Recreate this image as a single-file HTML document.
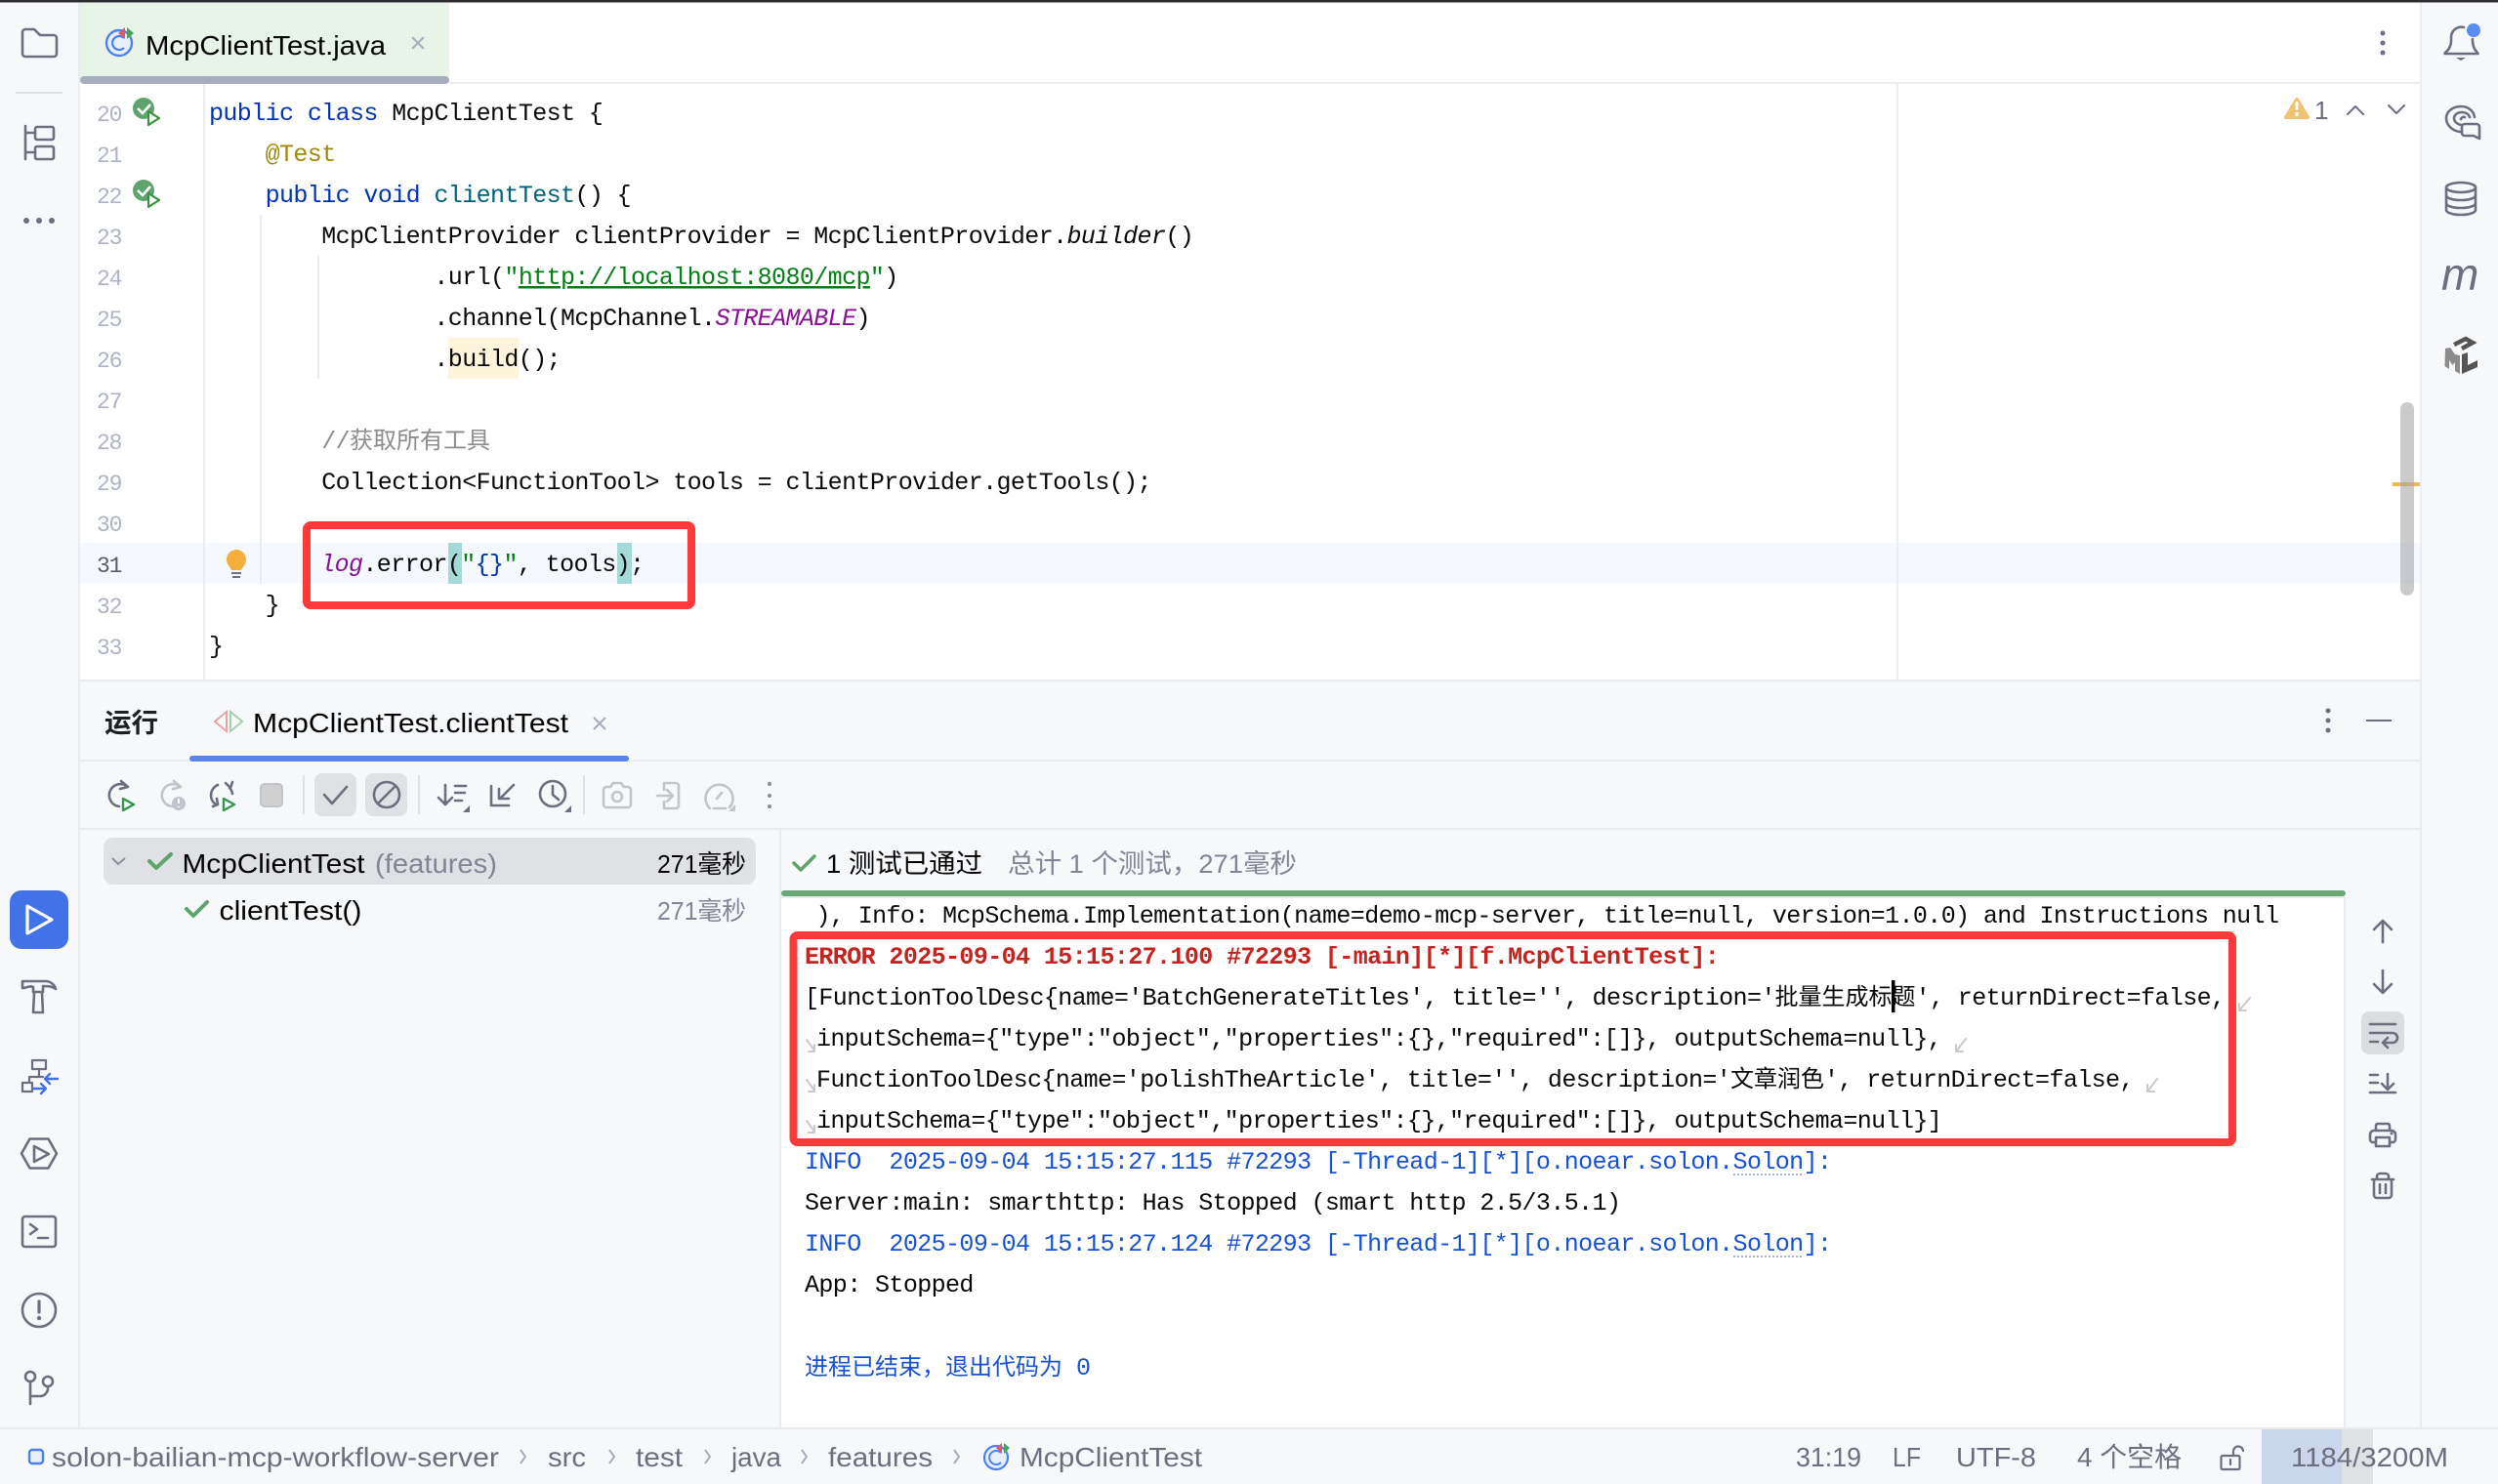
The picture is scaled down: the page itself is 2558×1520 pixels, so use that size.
<!DOCTYPE html>
<html><head><meta charset="utf-8"><style>
html,body{margin:0;padding:0;background:#f7f8fa;width:2558px;height:1520px;overflow:hidden}
svg{display:block}
text{white-space:pre}
.m{font-family:"Liberation Mono","Noto Sans CJK SC",monospace;font-size:25px;letter-spacing:-.6px;fill:#080808}
.cj{font-family:"Noto Sans CJK SC","Liberation Sans",sans-serif;font-size:24px;letter-spacing:0}
.n{font-family:"Liberation Mono",monospace;font-size:23px;letter-spacing:-1.2px;fill:#aeb3c2}
.s{font-family:"Liberation Sans","Noto Sans CJK SC",sans-serif;font-size:28px;fill:#000}
.g{fill:#6c707e}
.kw{fill:#0033b3}.st{fill:#067d17}.it{font-style:italic}.pu{fill:#871094}.er{fill:#c4241f;font-weight:bold}.bl{fill:#1750d0}
.ic{fill:none;stroke:#6c707e;stroke-width:2.6;stroke-linecap:round;stroke-linejoin:round}
.ig{fill:none;stroke:#c2c4cb;stroke-width:2.6;stroke-linecap:round;stroke-linejoin:round}
.wr{fill:none;stroke:#c9c9c9;stroke-width:2;stroke-linecap:round;stroke-linejoin:round}
</style></head><body>
<svg xmlns="http://www.w3.org/2000/svg" width="2558" height="1520" viewBox="0 0 2558 1520">
<rect width="2558" height="1520" fill="#f7f8fa"/>
<rect width="2558" height="2.5" fill="#2b2b30"/>

<!-- editor -->
<rect x="82" y="3" width="2396" height="693" fill="#fff"/>
<rect x="80" y="3" width="2" height="1459" fill="#ebecf0"/>
<rect x="2478" y="3" width="2" height="1459" fill="#ebecf0"/>
<rect x="82" y="3" width="378" height="76" fill="#e8f4e8"/>
<rect x="460" y="84" width="2018" height="2" fill="#ebecf0"/>
<rect x="82" y="78" width="378" height="8" rx="4" fill="#a8adbd"/>
<!-- tab icon -->
<circle cx="122" cy="44" r="13" fill="#e7effd" stroke="#4b82ee" stroke-width="2.4"/>
<path d="M127 39a7 7 0 1 0 0 10" fill="none" stroke="#4b82ee" stroke-width="2.2"/>
<path d="M128 28l-7 6 7 6z" fill="#e55765"/><path d="M130 28l7 6-7 6z" fill="#4f9e5a"/>
<text class="s" x="149" y="56" textLength="246" lengthAdjust="spacingAndGlyphs">McpClientTest.java</text>
<path d="M422 38l12 12M434 38l-12 12" fill="none" stroke="#a8adbd" stroke-width="2"/>
<!-- top right -->
<circle cx="2440" cy="34" r="2.5" fill="#6c707e"/><circle cx="2440" cy="44" r="2.5" fill="#6c707e"/><circle cx="2440" cy="54" r="2.5" fill="#6c707e"/>
<path d="M2352 102l11 18h-22z" fill="#efc36f" stroke="#efc36f" stroke-width="4" stroke-linejoin="round"/>
<rect x="2350.500" y="104" width="3" height="9" rx="1.500" fill="#fff"/><circle cx="2352" cy="117" r="2" fill="#fff"/>
<text class="s" x="2370" y="122" style="font-size:26px;fill:#6c707e">1</text>
<path class="ic" style="stroke-width:2" d="M2404 117l8-8 8 8M2446 108l8 8 8-8"/>

<!-- gutter / guides -->
<rect x="82" y="556" width="2396" height="42" fill="#f5f8fe"/>
<rect x="208" y="86" width="2" height="610" fill="#ebecf0"/>
<rect x="1942" y="86" width="2" height="610" fill="#ebecf0"/>
<rect x="266" y="220" width="2" height="378" fill="#ebecf0"/>
<rect x="325" y="262" width="2" height="126" fill="#ebecf0"/>
<rect x="459" y="346" width="72" height="42" fill="#fcf5dc"/>
<rect x="459" y="556" width="14" height="42" fill="#a3d9d6"/>
<rect x="632" y="556" width="15" height="42" fill="#a3d9d6"/>

<g class="n">
<text x="99" y="124">20</text><text x="99" y="166">21</text><text x="99" y="208">22</text><text x="99" y="250">23</text><text x="99" y="292">24</text><text x="99" y="334">25</text><text x="99" y="376">26</text><text x="99" y="418">27</text><text x="99" y="460">28</text><text x="99" y="502">29</text><text x="99" y="544">30</text><text x="99" y="586" style="fill:#5a5d6b">31</text><text x="99" y="628">32</text><text x="99" y="670">33</text>
</g>
<!-- gutter run icons -->
<g id="gr"><circle cx="147" cy="111" r="11" fill="#5fa46f"/><path d="M141 111l5 5 8-9" fill="none" stroke="#fff" stroke-width="2.6"/><path d="M152 114l11 7-11 7z" fill="#fff" stroke="#3a923f" stroke-width="2.2" stroke-linejoin="round"/></g>
<g transform="translate(0,84)"><circle cx="147" cy="111" r="11" fill="#5fa46f"/><path d="M141 111l5 5 8-9" fill="none" stroke="#fff" stroke-width="2.6"/><path d="M152 114l11 7-11 7z" fill="#fff" stroke="#3a923f" stroke-width="2.2" stroke-linejoin="round"/></g>
<!-- bulb -->
<path d="M242 563c-6 0-10 5-10 10 0 5 3 7 5 11h10c2-4 5-6 5-11 0-5-4-10-10-10z" fill="#f4af3d"/>
<path d="M237 587h10M238 591h8" stroke="#6c707e" stroke-width="2"/>

<!-- code -->
<g class="m" xml:space="preserve" transform="translate(0,-1)">
<text x="214" y="124"><tspan class="kw">public class </tspan>McpClientTest {</text>
<text x="271.600" y="166" style="fill:#9e880d">@Test</text>
<text x="271.600" y="208"><tspan class="kw">public void </tspan><tspan fill="#00627a">clientTest</tspan>() {</text>
<text x="329.200" y="250">McpClientProvider clientProvider = McpClientProvider.<tspan class="it">builder</tspan>()</text>
<text x="444.400" y="292">.url(<tspan class="st">"</tspan><tspan class="st" text-decoration="underline">http://localhost:8080/mcp</tspan><tspan class="st">"</tspan>)</text>
<text x="444.400" y="334">.channel(McpChannel.<tspan class="it pu">STREAMABLE</tspan>)</text>
<text x="444.400" y="376">.build();</text>
<text x="329.200" y="460" style="fill:#8c8c8c">//</text><text class="cj" x="358" y="460" style="fill:#8c8c8c">获取所有工具</text>
<text x="329.200" y="502">Collection&lt;FunctionTool&gt; tools = clientProvider.getTools();</text>
<text x="328.200" y="586"><tspan class="it pu">log</tspan>.error(<tspan class="st">"</tspan><tspan fill="#0037a6">{}</tspan><tspan class="st">"</tspan>, tools);</text>
<text x="271.600" y="628">}</text>
<text x="214" y="670">}</text>
</g>

<!-- scrollbar -->
<rect x="2450" y="494" width="28" height="4" fill="#e8bc5d"/>
<rect x="2458" y="412" width="14" height="198" rx="7" fill="#a0a0a0" fill-opacity=".55"/>

<!-- red box editor -->
<rect x="314" y="538" width="394" height="82" rx="4" fill="none" stroke="#fc3a3a" stroke-width="8"/>

<!-- tool window -->
<rect x="82" y="696" width="2396" height="2" fill="#ebecf0"/>
<text class="s" x="107" y="750" textLength="55" lengthAdjust="spacingAndGlyphs" style="font-weight:bold;font-size:27px;fill:#1e1f22">运行</text>
<path d="M232 729L220 739 232 749z" fill="none" stroke="#e8a5a5" stroke-width="2"/><path d="M236 729L248 739 236 749z" fill="none" stroke="#a8cfae" stroke-width="2"/>
<text class="s" x="259" y="750" textLength="323" lengthAdjust="spacingAndGlyphs">McpClientTest.clientTest</text>
<path d="M608 735l12 12M620 735l-12 12" fill="none" stroke="#a8adbd" stroke-width="2"/>
<circle cx="2384" cy="728" r="2.500" fill="#6c707e"/><circle cx="2384" cy="738" r="2.500" fill="#6c707e"/><circle cx="2384" cy="748" r="2.500" fill="#6c707e"/>
<rect x="2423" y="737" width="26" height="2" fill="#6c707e"/>
<rect x="82" y="778" width="2396" height="2" fill="#ebecf0"/>
<rect x="194" y="774" width="450" height="6" rx="3" fill="#5a85e8"/>
<rect x="82" y="848" width="2396" height="2" fill="#ebecf0"/>

<!-- toolbar -->
<path class="ic" d="M131 806a11.500 11.500 0 1 0-9 20M124 800l7 6-8 2"/><path d="M126 818l11 6-11 6z" fill="none" stroke="#369650" stroke-width="2.400" stroke-linejoin="round"/>
<path class="ig" d="M185 806a11.500 11.500 0 1 0-9 20M178 800l7 6-8 2"/><circle cx="183" cy="823" r="7" fill="#c2c4cb"/><path d="M183 818v5M183 826v1" stroke="#fff" stroke-width="2"/>
<path class="ic" d="M223 804a11.500 11.500 0 0 0-2 20M218 826l5-2-1-6"/><path class="ic" d="M231 802l5 5 2-6M235 807a11 11 0 0 1 3 6"/><path d="M229 818l11 6-11 6z" fill="none" stroke="#369650" stroke-width="2.400" stroke-linejoin="round"/>
<rect x="267" y="803" width="22" height="23" rx="4" fill="#d0d0d0" stroke="#c2c4cb" stroke-width="2"/>
<rect x="310" y="794" width="2" height="40" fill="#dfe1e5"/>
<rect x="322" y="792" width="43" height="44" rx="8" fill="#dfe1e5"/><path class="ic" d="M332 814l8 9 15-17"/>
<rect x="374" y="792" width="43" height="44" rx="8" fill="#dfe1e5"/><circle class="ic" cx="396" cy="814" r="13"/><path class="ic" d="M387 823l18-18"/>
<rect x="428" y="794" width="2" height="40" fill="#dfe1e5"/>
<path class="ic" d="M456 804v20M449 817l7 7 7-7M466 805h11M466 812h10M466 820h7"/><path d="M481 825v7h-7z" fill="#6c707e"/>
<path class="ic" d="M503 805v20h18M526 804l-14 14M511 808v10h10"/>
<circle class="ic" cx="566" cy="813" r="13"/><path class="ic" d="M566 805v9l6 5"/><path d="M585 825v7h-7z" fill="#6c707e"/>
<rect x="597" y="794" width="2" height="40" fill="#dfe1e5"/>
<path class="ig" d="M621 806h4l3-4h8l3 4h4a3 3 0 0 1 3 3v15a3 3 0 0 1-3 3h-22a3 3 0 0 1-3-3v-15a3 3 0 0 1 3-3z"/><circle class="ig" cx="632" cy="816" r="5"/>
<path class="ig" d="M680 802h12a3 3 0 0 1 3 3v20a3 3 0 0 1-3 3h-12v-7M680 809v-7M673 815h15M683 809l6 6-6 6"/>
<path class="ig" d="M727 828a14 14 0 1 1 20-1M731 828h12M734 818l5-6"/><path d="M753 824v7h-7z" fill="#c2c4cb"/>
<circle cx="788" cy="803" r="2" fill="#8a8d99"/><circle cx="788" cy="815" r="2" fill="#8a8d99"/><circle cx="788" cy="826" r="2" fill="#8a8d99"/>

<!-- tree -->
<rect x="106" y="858" width="668" height="48" rx="10" fill="#dfe1e5"/>
<path d="M115 879l6 6 7-6" fill="none" stroke="#8c8f9b" stroke-width="2"/>
<path d="M153 882l7 7 15-14" fill="none" stroke="#5fa46f" stroke-width="4" stroke-linecap="round" stroke-linejoin="round"/>
<text class="s" x="186.500" y="894" textLength="187" lengthAdjust="spacingAndGlyphs">McpClientTest</text>
<text class="s" x="384" y="894" textLength="125" lengthAdjust="spacingAndGlyphs" style="fill:#818594">(features)</text>
<text class="s" x="673" y="894" textLength="91" lengthAdjust="spacingAndGlyphs" style="font-size:26px">271毫秒</text>
<path d="M191 931l7 7 14-14" fill="none" stroke="#5fa46f" stroke-width="4" stroke-linecap="round" stroke-linejoin="round"/>
<text class="s" x="224.500" y="942" textLength="146" lengthAdjust="spacingAndGlyphs">clientTest()</text>
<text class="s" x="673" y="942" textLength="91" lengthAdjust="spacingAndGlyphs" style="font-size:26px;fill:#818594">271毫秒</text>

<!-- console panel -->
<rect x="798" y="850" width="2" height="612" fill="#ebecf0"/>
<path d="M813 884l7 7 14-14" fill="none" stroke="#5fa46f" stroke-width="3.500" stroke-linecap="round" stroke-linejoin="round"/>
<text class="s" x="846" y="894" textLength="160" lengthAdjust="spacingAndGlyphs" style="font-size:27px">1 测试已通过</text>
<text class="s" x="1032" y="894" textLength="296" lengthAdjust="spacingAndGlyphs" style="font-size:27px;fill:#818594">总计 1 个测试，271毫秒</text>
<rect x="800" y="918" width="1602" height="544" fill="#fff"/>
<rect x="800" y="918" width="1602" height="2" fill="#ebecf0"/>
<rect x="800" y="912" width="1602" height="6" rx="3" fill="#6aa775"/>
<rect x="2400" y="918" width="2" height="544" fill="#ebecf0"/>

<g class="m" xml:space="preserve">
<text x="835.500" y="945">), Info: McpSchema.Implementation(name=demo-mcp-server, title=null, version=1.0.0) and Instructions null</text>
<text class="er" x="824" y="987">ERROR 2025-09-04 15:15:27.100 #72293 [-main][*][f.McpClientTest]:</text>
<text x="824" y="1029">[FunctionToolDesc{name='BatchGenerateTitles', title='', description='</text><text class="cj" x="1817.500" y="1029">批量生成标题</text><text x="1961.600" y="1029">', returnDirect=false,</text>
<text x="836" y="1071">inputSchema={"type":"object","properties":{},"required":[]}, outputSchema=null},</text>
<text x="836" y="1113">FunctionToolDesc{name='polishTheArticle', title='', description='</text><text class="cj" x="1772" y="1113">文章润色</text><text x="1868" y="1113">', returnDirect=false,</text>
<text x="836" y="1155">inputSchema={"type":"object","properties":{},"required":[]}, outputSchema=null}]</text>
<text class="bl" x="824" y="1197">INFO  2025-09-04 15:15:27.115 #72293 [-Thread-1][*][o.noear.solon.Solon]:</text>
<text x="824" y="1239">Server:main: smarthttp: Has Stopped (smart http 2.5/3.5.1)</text>
<text class="bl" x="824" y="1281">INFO  2025-09-04 15:15:27.124 #72293 [-Thread-1][*][o.noear.solon.Solon]:</text>
<text x="824" y="1323">App: Stopped</text>
<text class="cj bl" x="824" y="1408">进程已结束，退出代码为</text><text class="bl" x="1102" y="1408">0</text>
</g>
<path d="M1775 1203h72M1775 1287h72" stroke="#8f9bb5" stroke-width="1.500" stroke-dasharray="2 2" fill="none"/>
<rect x="1937" y="1004" width="3.500" height="33" fill="#000"/>
<!-- wrap marks -->
<path class="wr" d="M2304 1022l-11 13M2293 1028v7h7M2013 1064l-10 13M2003 1070v7h7M2209 1105l-10 13M2199 1111v7h7"/>
<path class="wr" d="M826 1065l8 11M834 1070v7h-6M826 1106l8 11M834 1111v7h-6M826 1148l8 11M834 1153v7h-6"/>
<!-- red box console -->
<rect x="812.500" y="958" width="1473.500" height="212" rx="4" fill="none" stroke="#fc3a3a" stroke-width="8"/>

<!-- console toolbar -->
<path class="ic" d="M2440 965v-21M2431 952l9-9 9 9M2440 994v22M2431 1008l9 9 9-9"/>
<rect x="2418" y="1036" width="44" height="44" rx="8" fill="#dcdde0"/>
<path class="ic" d="M2427 1049h26M2427 1058h23a5 5 0 0 1 0 10h-9M2445 1063l-5 5 5 5M2427 1067h8"/>
<path class="ic" d="M2427 1101h8M2427 1109h8M2427 1119h26M2445 1100v15M2439 1110l6 6 6-6"/>
<path class="ic" d="M2433 1158v-5a2 2 0 0 1 2-2h10a2 2 0 0 1 2 2v5M2433 1170h-3a3 3 0 0 1-3-3v-5a4 4 0 0 1 4-4h18a4 4 0 0 1 4 4v5a3 3 0 0 1-3 3h-3M2433 1165h14v9h-14z"/><circle cx="2449" cy="1161" r="1.500" fill="#6c707e"/>
<path class="ic" d="M2429 1208h22M2434 1208v-3a3 3 0 0 1 3-3h6a3 3 0 0 1 3 3v3M2431 1208v16a3 3 0 0 0 3 3h12a3 3 0 0 0 3-3v-16M2437 1213v9M2443 1213v9"/>

<!-- left stripe -->
<path class="ic" d="M23 33a3 3 0 0 1 3-3h9l6 6h14a3 3 0 0 1 3 3v16a3 3 0 0 1-3 3H26a3 3 0 0 1-3-3z"/>
<rect x="16" y="94" width="48" height="2" fill="#dfe1e5"/>
<path class="ic" d="M26 129v34M26 136h10M26 156h10"/><rect class="ic" x="36" y="130" width="19" height="13" rx="2"/><rect class="ic" x="36" y="150" width="19" height="13" rx="2"/>
<circle cx="27" cy="226" r="3" fill="#6c707e"/><circle cx="40" cy="226" r="3" fill="#6c707e"/><circle cx="53" cy="226" r="3" fill="#6c707e"/>
<rect x="10" y="912" width="60" height="60" rx="12" fill="#4172e8"/>
<path d="M28 928l25 14-25 14z" fill="none" stroke="#fff" stroke-width="3.200" stroke-linejoin="round"/>
<path class="ic" d="M23 1005H47C52 1005 56 1009 57 1013C53 1010 49 1010 44 1010V1016H34V1011C31 1009 27 1012 23 1012ZM35 1017L34 1037H44L43 1017"/>
<path class="ic" style="stroke-width:2.200" d="M33 1086h14v9H33zM40 1095v8M30 1103h14M30 1103v6M23 1109h10v9H23z"/>
<path fill="none" stroke="#4172e8" stroke-width="2.400" stroke-linecap="round" stroke-linejoin="round" d="M59 1105H46M51 1100l-5 5 5 5M34 1115h13M42 1110l5 5-5 5"/>
<path class="ic" d="M22 1181.500l8.500-15h19l8.500 15-8.500 15h-19z"/><path class="ic" d="M35 1174l15 8-15 8z"/>
<rect class="ic" x="23" y="1246" width="34" height="31" rx="2.500"/><path class="ic" d="M31 1254l7 5-7 5M39 1268h10"/>
<circle class="ic" cx="40" cy="1342" r="17"/><path d="M40 1333v11" stroke="#6c707e" stroke-width="3.200" stroke-linecap="round"/><circle cx="40" cy="1350" r="2.200" fill="#6c707e"/>
<circle class="ic" cx="31" cy="1410" r="5"/><circle class="ic" cx="49" cy="1415" r="5"/><path class="ic" d="M31 1415v23M49 1420v2a8 8 0 0 1-8 8H31"/>

<!-- right stripe -->
<path class="ic" d="M2523 28a10.500 10.500 0 0 0-13 11v3q0 7-6 12q-1 1 0 1h33q1 0 0-1q-5-5-5-12v-2"/><path d="M2515 59h10l-5 3z" fill="#6c707e"/>
<circle cx="2533" cy="31" r="7" fill="#588cf3"/>
<path class="ic" d="M2519 135c-8-1-14-7-14-14c0-7 7-12 15-12c7 0 13 4 14 11M2522 128c-5 0-9-3-9-7c0-3 3-6 8-6c4 0 7 2 8 5M2520 122a3 3 0 0 1 4-2"/>
<path class="ic" style="fill:#f7f8fa" d="M2524 127h12a3 3 0 0 1 3 3v12l-6-3h-9a3 3 0 0 1-3-3v-6a3 3 0 0 1 3-3z"/>
<ellipse class="ic" cx="2520" cy="192" rx="15" ry="5"/><path class="ic" d="M2505 192v23c0 3 7 5 15 5s15-2 15-5v-23M2505 200c0 3 7 5 15 5s15-2 15-5M2505 208c0 3 7 5 15 5s15-2 15-5"/>
<text x="2500" y="297" style="font-family:'Liberation Sans',sans-serif;font-style:italic;font-size:46px;fill:#6c707e">m</text>
<path d="M2504 357l5-1 5 7 5 1v19l-5-3v-9l-2.500 3-3.500-5v9l-4.500-3z" fill="#8c8c8c"/>
<path d="M2521 383v-20l6-2v13l10-5v7z" fill="#555"/>
<path d="M2513 353l12-6 7 4-11 6" fill="none" stroke="#555" stroke-width="4.500"/>

<!-- status bar -->
<rect x="0" y="1462" width="2558" height="2" fill="#ebecf0"/>
<rect x="30" y="1485" width="14" height="14" rx="3" fill="#e7effd" stroke="#4b82ee" stroke-width="2.400"/>
<g class="s g">
<text class="g" x="53" y="1502" textLength="458" lengthAdjust="spacingAndGlyphs">solon-bailian-mcp-workflow-server</text>
<text class="g" x="561" y="1502" textLength="39" lengthAdjust="spacingAndGlyphs">src</text>
<text class="g" x="651" y="1502" textLength="48" lengthAdjust="spacingAndGlyphs">test</text>
<text class="g" x="749" y="1502" textLength="51" lengthAdjust="spacingAndGlyphs">java</text>
<text class="g" x="848" y="1502" textLength="107" lengthAdjust="spacingAndGlyphs">features</text>
<text class="g" x="1044" y="1502" textLength="187" lengthAdjust="spacingAndGlyphs">McpClientTest</text>
</g>
<path fill="none" stroke="#a8adbd" stroke-width="2" d="M533 1485l5 7-5 7M624 1485l5 7-5 7M722 1485l5 7-5 7M821 1485l5 7-5 7M977 1485l5 7-5 7"/>
<circle cx="1020" cy="1493" r="12" fill="#e7effd" stroke="#4b82ee" stroke-width="2.200"/>
<path d="M1025 1488a7 7 0 1 0 0 10" fill="none" stroke="#4b82ee" stroke-width="2"/>
<path d="M1026 1478l-6 5 6 6z" fill="#e55765"/><path d="M1028 1478l6 5-6 6z" fill="#4f9e5a"/>

<text class="s g" x="1839" y="1502" textLength="67" lengthAdjust="spacingAndGlyphs">31:19</text>
<text class="s g" x="1938" y="1502" textLength="29" lengthAdjust="spacingAndGlyphs">LF</text>
<text class="s g" x="2003" y="1502" textLength="82" lengthAdjust="spacingAndGlyphs">UTF-8</text>
<text class="s g" x="2127" y="1502" textLength="107" lengthAdjust="spacingAndGlyphs">4 个空格</text>
<path class="ic" style="stroke-width:2.200" d="M2276 1491h16a1.500 1.500 0 0 1 1.500 1.500v11a1.500 1.500 0 0 1-1.500 1.500h-16a1.500 1.500 0 0 1-1.500-1.500v-11a1.500 1.500 0 0 1 1.500-1.500zM2287 1491v-4a5 5 0 0 1 10-1M2284 1495v5"/>
<rect x="2316" y="1464" width="82" height="56" fill="#c9d6ec"/>
<rect x="2398" y="1464" width="32" height="56" fill="#dfe1e5"/>
<text class="s g" x="2346" y="1502" textLength="161" lengthAdjust="spacingAndGlyphs">1184/3200M</text>
</svg>
</body></html>
